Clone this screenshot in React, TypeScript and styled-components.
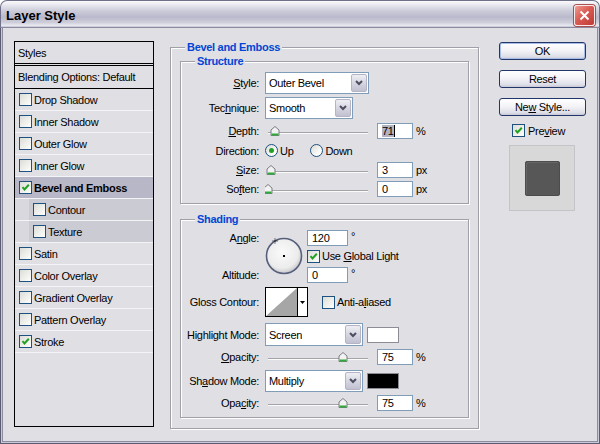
import styled, { createGlobalStyle } from "styled-components";

const GlobalStyle = createGlobalStyle`
  html, body {
    margin: 0;
    padding: 0;
    background: #fff;
  }
  * {
    box-sizing: border-box;
  }
`;

const Window = styled.div`
  width: 600px;
  height: 444px;
  display: flex;
  flex-direction: column;
  font-family: "Liberation Sans", Arial, sans-serif;
  font-size: 11px;
  letter-spacing: -0.3px;
  color: #000;
`;

const TitleBar = styled.div`
  height: 28px;
  flex: none;
  display: flex;
  align-items: center;
  justify-content: space-between;
  padding: 0 4px 0 5px;
  border: 1px solid #70708a;
  border-bottom-color: #8a8aa0;
  border-radius: 7px 7px 0 0;
  background: linear-gradient(
    180deg,
    #fbfbfd 0%,
    #e4e4ec 18%,
    #cacad8 40%,
    #b9b9cc 62%,
    #cdcdda 82%,
    #e8e8f0 94%,
    #c0c0d0 100%
  );
`;

const Title = styled.span`
  margin-top: 3px;
  font-size: 13px;
  font-weight: bold;
  letter-spacing: 0;
`;

const CloseButton = styled.div`
  width: 21px;
  height: 21px;
  margin-top: 2px;
  border: 1px solid #fbeaea;
  border-radius: 3px;
  background: linear-gradient(135deg, #ee9c92 0%, #d95c54 45%, #c03a36 100%);
  box-shadow: 0 0 0 1px #a85050;
  display: flex;
  align-items: center;
  justify-content: center;
`;

const Body = styled.div`
  flex: 1;
  display: flex;
  align-items: flex-start;
  padding: 13px 0 0 13px;
  background: #e0dfe3;
  border: 1px solid #5c5c70;
  border-top: none;
  box-shadow: inset 1px 0 #c8c8d6, inset -1px 0 #c8c8d6, inset 0 -1px #c8c8d6,
    inset 2px 0 #8c8ca2, inset -2px 0 #8c8ca2, inset 0 -2px #8c8ca2;
`;

/* ---------- left list ---------- */

const StyleList = styled.div`
  width: 140px;
  height: 386px;
  flex: none;
  border: 1px solid #000;
`;

const ListHeader = styled.div`
  height: 24px;
  padding-left: 3px;
  display: flex;
  align-items: center;
  border-bottom: 3px double #000;
`;

const ListBlending = styled.div`
  height: 23px;
  padding-left: 3px;
  display: flex;
  align-items: center;
  border-bottom: 1px solid #000;
`;

const ListItem = styled.div<{ $selected?: boolean; $sub?: boolean }>`
  height: 22px;
  display: flex;
  align-items: center;
  gap: 2px;
  padding-left: ${(p) => (p.$sub ? 18 : 4)}px;
  border-bottom: 1px solid #f4f4f7;
  font-weight: ${(p) => (p.$selected ? "bold" : "normal")};
  background: ${(p) =>
    p.$selected
      ? "#b7b7c7"
      : p.$sub
      ? "linear-gradient(90deg, #d8d8de 14px, #cbcbd3 14px)"
      : "transparent"};
`;

const Box = styled.span`
  width: 13px;
  height: 13px;
  flex: none;
  border: 1px solid #1c5180;
  background: linear-gradient(135deg, #dcdcd7 0%, #f4f4f2 70%, #fff 100%);
  display: flex;
  align-items: center;
  justify-content: center;
`;

function Check({ on }: { on?: boolean }) {
  return (
    <Box>
      {on && (
        <svg width="11" height="11" viewBox="0 0 11 11">
          <path d="M2.5 5.2 L4.5 7.4 L8.8 2.8" fill="none" stroke="#21a121" strokeWidth="2" />
        </svg>
      )}
    </Box>
  );
}

/* ---------- main groups ---------- */

const Group = styled.fieldset<{ $pb: number; $mt?: number; $mx?: number }>`
  margin: ${(p) => p.$mt ?? 0}px ${(p) => p.$mx ?? 0}px 0;
  padding: 0 0 ${(p) => p.$pb}px;
  min-width: 0;
  border: 1px solid #a0a0a8;
  box-shadow: inset 1px 1px #fff, 1px 1px #fff;
`;

const MainGroup = styled(Group)`
  width: 309px;
  flex: none;
  margin-left: 16px;
`;

const Legend = styled.legend`
  margin-left: 14px;
  padding: 0 2px;
  line-height: 13px;
  font-weight: bold;
  color: #0046d5;
  background: #e0dfe3;
`;

const Rows = styled.div<{ $pt: number }>`
  padding-top: ${(p) => p.$pt}px;
`;

const FormRow = styled.div<{ $h: number; $mt?: number }>`
  display: grid;
  grid-template-columns: 84px 1fr;
  align-items: center;
  height: ${(p) => p.$h}px;
  margin-top: ${(p) => p.$mt ?? 0}px;
`;

const Label = styled.span`
  text-align: right;
  padding-right: 6px;
  white-space: nowrap;
`;

const Controls = styled.div`
  display: flex;
  align-items: center;
`;

const SelectBox = styled.div<{ $w: number; $h: number }>`
  width: ${(p) => p.$w}px;
  height: ${(p) => p.$h}px;
  flex: none;
  display: flex;
  border: 1px solid #7f9db9;
  background: #fff;
`;

const SelectText = styled.span`
  flex: 1;
  padding-left: 3px;
  display: flex;
  align-items: center;
`;

const SelectArrow = styled.span`
  width: 16px;
  margin: 1px;
  border: 1px solid #b4b4c6;
  border-radius: 2px;
  background: linear-gradient(180deg, #eeeef4 0%, #d2d2de 60%, #c0c0d0 100%);
  display: flex;
  align-items: center;
  justify-content: center;
`;

function Select({ value, w, h }: { value: string; w: number; h: number }) {
  return (
    <SelectBox $w={w} $h={h}>
      <SelectText>{value}</SelectText>
      <SelectArrow>
        <svg width="8" height="6" viewBox="0 0 8 6">
          <path d="M1 1 L4 4 L7 1" fill="none" stroke="#4d4d60" strokeWidth="2" />
        </svg>
      </SelectArrow>
    </SelectBox>
  );
}

const Field = styled.div<{ $w: number; $ml?: number }>`
  width: ${(p) => p.$w}px;
  height: 16px;
  flex: none;
  margin-left: ${(p) => p.$ml ?? 0}px;
  padding-left: 4px;
  display: flex;
  align-items: center;
  border: 1px solid #7f9db9;
  background: #fff;
`;

const Selected = styled.span`
  height: 12px;
  display: flex;
  align-items: center;
  background: #b2b2c0;
  border-right: 1px solid #000;
`;

const Unit = styled.span<{ $sup?: boolean }>`
  margin-left: 3px;
  align-self: ${(p) => (p.$sup ? "flex-start" : "center")};
`;

function Slider({ pos }: { pos: number }) {
  const x = 3 + pos;
  return (
    <svg width="106" height="12" viewBox="0 0 106 12" style={{ flex: "none" }}>
      <line x1="3" x2="103" y1="7.5" y2="7.5" stroke="#a4a4a8" />
      <line x1="3" x2="103" y1="8.5" y2="8.5" stroke="#fafafa" />
      <path
        d={`M${x} 1.5 L${x + 4} 5 L${x + 4} 10.5 L${x - 4} 10.5 L${x - 4} 5 Z`}
        fill="#f2f2f2"
        stroke="#7c7c84"
      />
      <line x1={x - 3.5} x2={x + 3.5} y1="9.5" y2="9.5" stroke="#2eaa3a" strokeWidth="2" />
    </svg>
  );
}

const RadioDot = styled.span<{ $on?: boolean }>`
  width: 13px;
  height: 13px;
  flex: none;
  border-radius: 50%;
  border: 1px solid #1c5180;
  background: linear-gradient(135deg, #dcdcd7 0%, #fff 80%);
  display: flex;
  align-items: center;
  justify-content: center;

  &::after {
    content: "";
    width: 5px;
    height: 5px;
    border-radius: 50%;
    background: ${(p) => (p.$on ? "#21a121" : "transparent")};
  }
`;

const Option = styled.span<{ $ml?: number }>`
  display: flex;
  align-items: center;
  gap: 2px;
  margin-left: ${(p) => p.$ml ?? 0}px;
  white-space: nowrap;
`;

const AngleGrid = styled.div`
  display: grid;
  grid-template-columns: 84px 42px 1fr;
  grid-template-rows: 17px 20px 17px;
  align-items: center;
  margin-top: 3px;
`;

const DialCell = styled.div`
  grid-column: 2;
  grid-row: 1 / 4;
  align-self: center;
  margin-top: 2px;
`;

const InputCell = styled.div`
  grid-column: 3;
  display: flex;
  align-items: center;
`;

const ContourPicker = styled.div`
  height: 30px;
  display: flex;
  border: 1px solid #000;
  background: #fff;
`;

const ContourArrow = styled.span`
  width: 10px;
  border-left: 1px solid #000;
  display: flex;
  align-items: center;
  justify-content: center;
`;

const Swatch = styled.div<{ $color: string }>`
  width: 32px;
  height: 16px;
  margin-left: 4px;
  border: 1px solid #8c8c94;
  background: ${(p) => p.$color};
`;

/* ---------- right column ---------- */

const Side = styled.div`
  margin-left: 20px;
  padding-top: 1px;
  display: flex;
  flex-direction: column;
  gap: 10px;
`;

const Button = styled.div<{ $default?: boolean }>`
  width: 87px;
  height: 18px;
  display: flex;
  align-items: center;
  justify-content: center;
  border: 1px solid #22366a;
  border-radius: 3px;
  background: linear-gradient(180deg, #ffffff 0%, #f4f4f8 45%, #dedee8 85%, #c8c8d6 100%);
  box-shadow: ${(p) => (p.$default ? "inset 0 0 0 1px #a6bde8" : "none")};
`;

const PreviewToggle = styled.div`
  margin: -2px 0 0 13px;
  display: flex;
  align-items: center;
  gap: 3px;
`;

const PreviewBox = styled.div`
  width: 66px;
  height: 66px;
  margin: -2px 0 0 10px;
  border: 1px solid #c4c4c8;
  background: #d8d8d8;
  display: flex;
  align-items: center;
  justify-content: center;
`;

const PreviewTile = styled.div`
  width: 35px;
  height: 35px;
  border-radius: 3px;
  background: #575757;
  box-shadow: inset 0 0 0 1px #4c4c4c, inset 1px 1px 0 1px #666;
`;

const effects: { name: string; on?: boolean; selected?: boolean; sub?: boolean }[] = [
  { name: "Drop Shadow" },
  { name: "Inner Shadow" },
  { name: "Outer Glow" },
  { name: "Inner Glow" },
  { name: "Bevel and Emboss", on: true, selected: true },
  { name: "Contour", sub: true },
  { name: "Texture", sub: true },
  { name: "Satin" },
  { name: "Color Overlay" },
  { name: "Gradient Overlay" },
  { name: "Pattern Overlay" },
  { name: "Stroke", on: true },
];

export default function App() {
  return (
    <Window>
      <GlobalStyle />
      <TitleBar>
        <Title>Layer Style</Title>
        <CloseButton>
          <svg width="11" height="11" viewBox="0 0 11 11">
            <path d="M1.5 1.5 L9.5 9.5 M9.5 1.5 L1.5 9.5" stroke="#fff" strokeWidth="2" />
          </svg>
        </CloseButton>
      </TitleBar>

      <Body>
        <StyleList>
          <ListHeader>Styles</ListHeader>
          <ListBlending>Blending Options: Default</ListBlending>
          {effects.map((e) => (
            <ListItem key={e.name} $selected={e.selected} $sub={e.sub}>
              <Check on={e.on} />
              <span>{e.name}</span>
            </ListItem>
          ))}
        </StyleList>

        <MainGroup $pb={10}>
          <Legend>Bevel and Emboss</Legend>

          <Group $pb={5} $mt={1} $mx={9}>
            <Legend>Structure</Legend>
            <Rows $pt={2}>
              <FormRow $h={26}>
                <Label>
                  <u>S</u>tyle:
                </Label>
                <Controls>
                  <Select value="Outer Bevel" w={104} h={22} />
                </Controls>
              </FormRow>
              <FormRow $h={24}>
                <Label>
                  Tec<u>h</u>nique:
                </Label>
                <Controls>
                  <Select value="Smooth" w={88} h={22} />
                </Controls>
              </FormRow>
              <FormRow $h={21}>
                <Label>
                  <u>D</u>epth:
                </Label>
                <Controls>
                  <Slider pos={7} />
                  <Field $w={36} $ml={6}>
                    <Selected>71</Selected>
                  </Field>
                  <Unit>%</Unit>
                </Controls>
              </FormRow>
              <FormRow $h={19}>
                <Label>Direction:</Label>
                <Controls>
                  <Option>
                    <RadioDot $on />
                    <span>Up</span>
                  </Option>
                  <Option $ml={17}>
                    <RadioDot />
                    <span>Down</span>
                  </Option>
                </Controls>
              </FormRow>
              <FormRow $h={19}>
                <Label>
                  <u>S</u>ize:
                </Label>
                <Controls>
                  <Slider pos={3} />
                  <Field $w={36} $ml={6}>3</Field>
                  <Unit>px</Unit>
                </Controls>
              </FormRow>
              <FormRow $h={19}>
                <Label>
                  So<u>f</u>ten:
                </Label>
                <Controls>
                  <Slider pos={0} />
                  <Field $w={36} $ml={6}>0</Field>
                  <Unit>px</Unit>
                </Controls>
              </FormRow>
            </Rows>
          </Group>

          <Group $pb={6} $mt={9} $mx={9}>
            <Legend>Shading</Legend>
            <AngleGrid>
              <Label>
                A<u>n</u>gle:
              </Label>
              <DialCell>
                <svg width="38" height="38" viewBox="0 0 38 38">
                  <defs>
                    <radialGradient id="dialFill" cx="45%" cy="40%" r="60%">
                      <stop offset="0%" stopColor="#fafafa" />
                      <stop offset="75%" stopColor="#ececec" />
                      <stop offset="100%" stopColor="#c8c8cc" />
                    </radialGradient>
                  </defs>
                  <circle cx="19" cy="19" r="17.5" fill="url(#dialFill)" stroke="#56607c" strokeWidth="1.6" />
                  <rect x="18" y="18" width="2" height="2" fill="#000" />
                  <path d="M10 1.5 V6.5 M7.5 4 H12.5" stroke="#000" strokeWidth="1" strokeDasharray="1 1" />
                </svg>
              </DialCell>
              <InputCell>
                <Field $w={41}>120</Field>
                <Unit $sup>°</Unit>
              </InputCell>
              <InputCell>
                <Option>
                  <Check on />
                  <span>
                    Use <u>G</u>lobal Light
                  </span>
                </Option>
              </InputCell>
              <Label>Altitude:</Label>
              <InputCell>
                <Field $w={41}>0</Field>
                <Unit $sup>°</Unit>
              </InputCell>
            </AngleGrid>

            <FormRow $h={30} $mt={4}>
              <Label>Gloss Contour:</Label>
              <Controls>
                <ContourPicker>
                  <svg width="31" height="28" viewBox="0 0 31 28">
                    <path d="M0 28 L31 0 L31 28 Z" fill="#a6a6a6" />
                  </svg>
                  <ContourArrow>
                    <svg width="5" height="3" viewBox="0 0 5 3">
                      <path d="M0 0 H5 L2.5 3 Z" fill="#000" />
                    </svg>
                  </ContourArrow>
                </ContourPicker>
                <Option $ml={14}>
                  <Check />
                  <span>
                    Anti-a<u>l</u>iased
                  </span>
                </Option>
              </Controls>
            </FormRow>

            <FormRow $h={23} $mt={6}>
              <Label>Highlight Mode:</Label>
              <Controls>
                <Select value="Screen" w={98} h={23} />
                <Swatch $color="#fff" />
              </Controls>
            </FormRow>
            <FormRow $h={17} $mt={2}>
              <Label>
                <u>O</u>pacity:
              </Label>
              <Controls>
                <Slider pos={75} />
                <Field $w={36} $ml={6}>75</Field>
                <Unit>%</Unit>
              </Controls>
            </FormRow>
            <FormRow $h={22} $mt={5}>
              <Label>
                Sh<u>a</u>dow Mode:
              </Label>
              <Controls>
                <Select value="Multiply" w={98} h={22} />
                <Swatch $color="#000" />
              </Controls>
            </FormRow>
            <FormRow $h={17} $mt={2}>
              <Label>
                Opa<u>c</u>ity:
              </Label>
              <Controls>
                <Slider pos={75} />
                <Field $w={36} $ml={6}>75</Field>
                <Unit>%</Unit>
              </Controls>
            </FormRow>
          </Group>
        </MainGroup>

        <Side>
          <Button $default>OK</Button>
          <Button>Reset</Button>
          <Button>
            <span>
              Ne<u>w</u> Style...
            </span>
          </Button>
          <PreviewToggle>
            <Check on />
            <span>
              Pre<u>v</u>iew
            </span>
          </PreviewToggle>
          <PreviewBox>
            <PreviewTile />
          </PreviewBox>
        </Side>
      </Body>
    </Window>
  );
}
